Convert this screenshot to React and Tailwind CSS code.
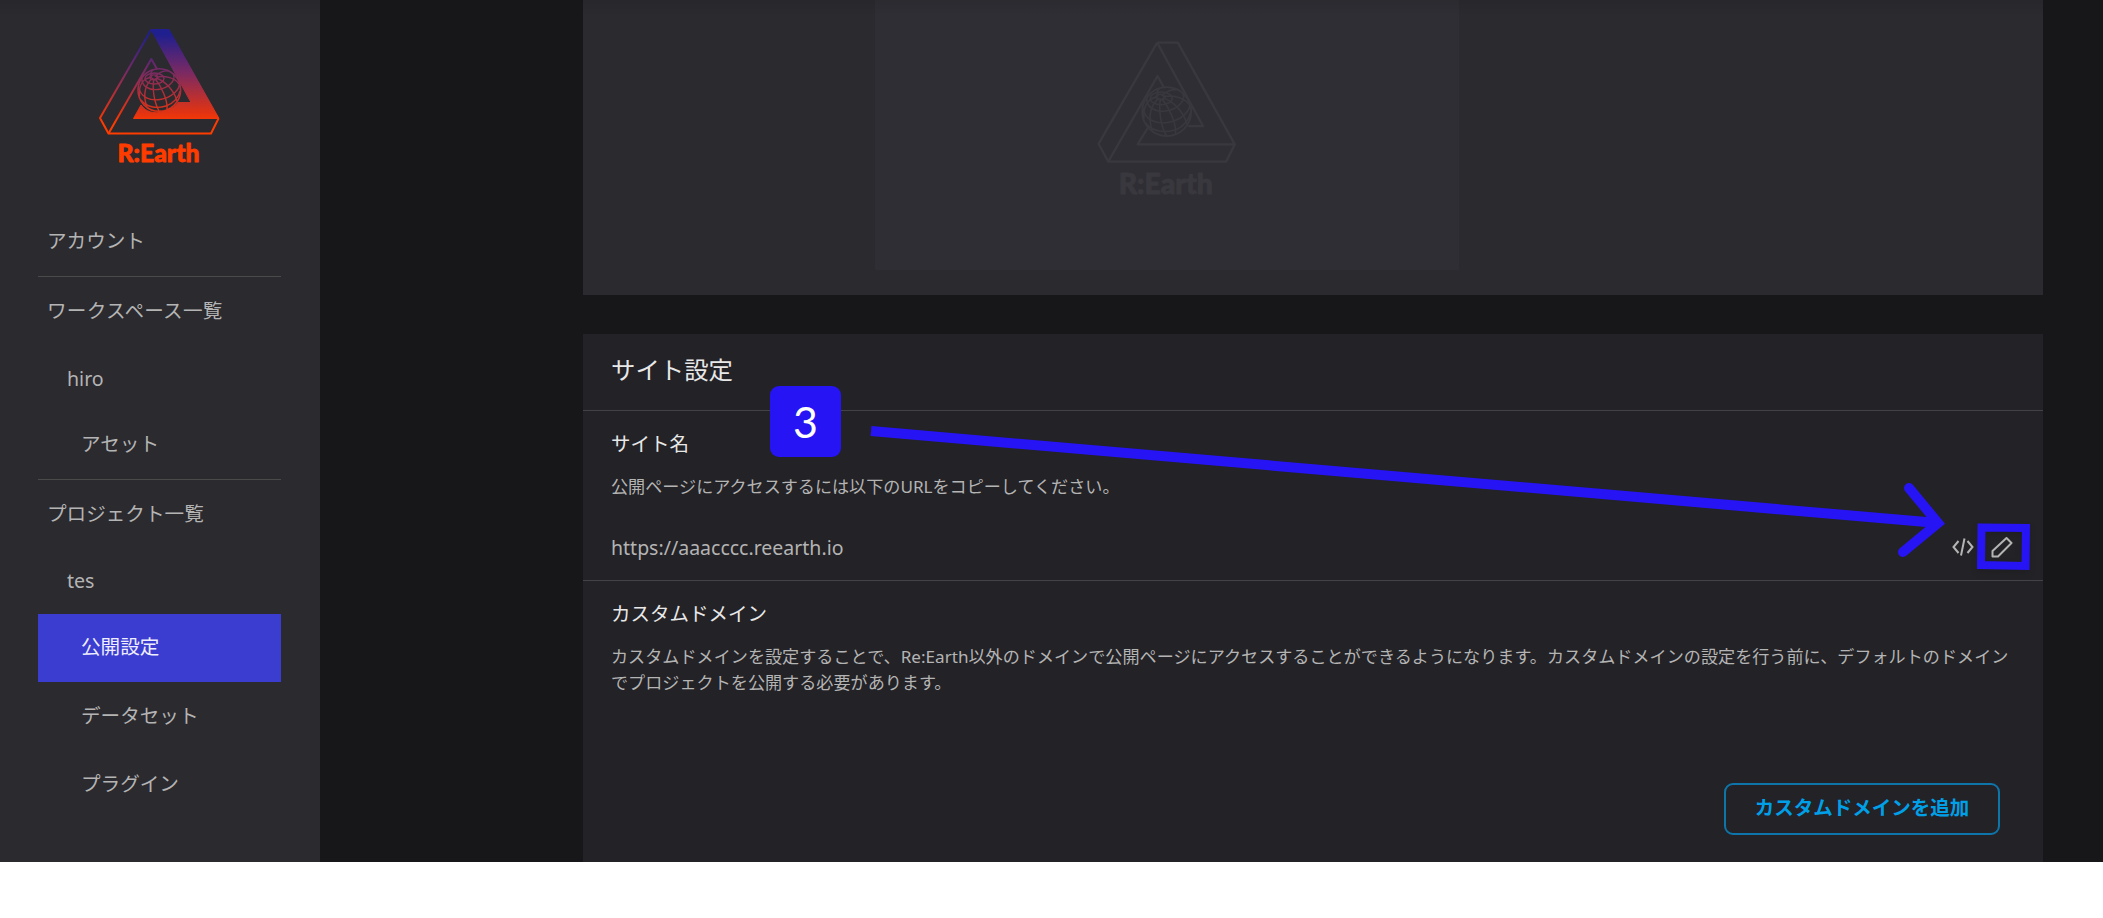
const NAV = [
  { label: "アカウント", cls: "pl-[9px] h-[69px] pb-[2px] border-b border-[#4a4a4a]" },
  { label: "ワークスペース一覧", cls: "pl-[9px] h-[68px] pb-px tracking-[0.25px]" },
  { label: "hiro", cls: "pl-[29px] h-[67px]" },
  { label: "アセット", cls: "pl-[43px] h-[68px] pb-[3px] border-b border-[#4a4a4a]" },
  { label: "プロジェクト一覧", cls: "pl-[9px] h-[67px]" },
  { label: "tes", cls: "pl-[29px] h-[67px]" },
  { label: "公開設定", cls: "pl-[43px] h-[68px] pb-[2px] bg-[#3b3cd0] text-[#eeeeff]" },
  { label: "データセット", cls: "pl-[43px] h-[68px]" },
  { label: "プラグイン", cls: "pl-[43px] h-[67px]" },
];

function Globe() {
  return (
    <g strokeWidth="1.4">
      <circle cx="79.3" cy="80" r="21.3" strokeWidth="1.6" />
      <ellipse cx="73.8" cy="67.3" rx="4" ry="2.4" />
      <ellipse cx="74.5" cy="68.5" rx="9.5" ry="5.5" />
      <path d="M62 67.5C61 76 69 80.5 78 79.5C88 78.5 96 71 93.500 64.500" />
      <path d="M58.500 76C60 88 71 91 80 89.500C91 88 100 80 99.500 73" />
      <path d="M61 90C67 98 78 98.500 86 96C93 94 99 87 100 81" />
      <path d="M72 67C64 68 58.500 74 59.500 86" />
      <path d="M73 68C66 73 62 84 67 97" />
      <path d="M74 68.500C72 78 74 92 79 101" />
      <path d="M75 68.500C81 76 88 90 87 99.500" />
      <path d="M76 68C85 71 94 80 97 91" />
      <path d="M76 67C86 65.500 95 68 99 74" />
      <path d="M75 66.500C78 62.500 84 60.500 88 61" />
      <path d="M72 66.500C70 63.500 71 61.500 73 60" />
    </g>
  );
}

function Logo({ mono, className }) {
  const paint = mono ? "#39383e" : "url(#logo-gradient)";
  return (
    <svg viewBox="18 16 124 140" className={className} fill="none" stroke={paint} strokeWidth="2" strokeLinejoin="round">
      <defs>
        <linearGradient id="logo-gradient" gradientUnits="userSpaceOnUse" x1="0" y1="19" x2="0" y2="124">
          <stop offset="0.05" stopColor="#1f1f8f" />
          <stop offset="0.42" stopColor="#7c2a62" />
          <stop offset="0.8" stopColor="#e23312" />
          <stop offset="0.9" stopColor="#ff3c00" />
        </linearGradient>
      </defs>
      <path d="M71 20L20 108L28.500 123.500H131L138.500 108.500" />
      <path d="M28.500 123.500L71.300 49L77 59" />
      {mono ? (
        <path d="M71 20H89L138.500 108.500H54L63 94M71 20L111 92.700H98" />
      ) : (
        <path fill={paint} strokeWidth="1" d="M71 19.500H89L139 108.500H53.500L61 95C66 102 74 104 82 102C90 100 95 97 98 92.500H111Z" />
      )}
      <Globe />
      <text x="37.500" y="152" textLength="82" lengthAdjust="spacingAndGlyphs" fill={mono ? "#39383e" : "#ff3c00"} stroke={mono ? "#39383e" : "#ff3c00"} strokeWidth="0.8" className="font-['Lato'] text-[24px] font-black">
        R:Earth
      </text>
    </svg>
  );
}

export default function App() {
  return (
    <div className="relative h-[918px] w-[2103px] overflow-hidden bg-white font-['Noto_Sans','Noto_Sans_CJK_JP',sans-serif] text-[#b4b4b4]">
      <div className="flex h-[862px] bg-[#171719]">
        <aside className="w-[320px] shrink-0 bg-[#2b2a2f]">
          <div className="flex h-[208px] justify-center bg-linear-to-b from-black/8 to-transparent to-[16px] pt-[26px]">
            <Logo className="h-[140px] w-[124px]" />
          </div>
          <nav className="ml-[38px] w-[243px] text-[19.6px]">
            {NAV.map((item) => (
              <div key={item.label} className={`flex items-center ${item.cls}`}>{item.label}</div>
            ))}
          </nav>
        </aside>
        <main className="ml-[263px] w-[1460px]">
          <section className="flex h-[295px] bg-[#2b2a2f] bg-linear-to-b from-black/8 to-transparent to-[16px] pl-[292px]">
            <div className="flex h-[270px] w-[584px] justify-center bg-[#2f2e34] bg-linear-to-b from-black/8 to-transparent to-[16px] pt-[38px]">
              <Logo mono className="h-[161px] w-[143px]" />
            </div>
          </section>
          <section className="mt-[39px] flex h-[528px] flex-col bg-[#232226]">
            <h2 className="flex h-[77px] items-center border-b border-[#434246] pl-[28px] pb-1 text-[24.4px] text-[#e8e8e8]">サイト設定</h2>
            <div className="flex h-[170px] flex-col border-b border-[#434246] pl-[28px] pt-[20px]">
              <h3 className="text-[19.5px] leading-[26px] text-[#e8e8e8]">サイト名</h3>
              <p className="mt-[17px] text-[17.1px] leading-[26px]">公開ページにアクセスするには以下のURLをコピーしてください。</p>
              <div className="mt-[34px] flex items-center justify-between">
                <span className="text-[19.5px] leading-[28px]">https://aaacccc.reearth.io</span>
                <div className="flex items-center gap-[17px] pr-[30px]">
                  <svg className="h-[22px] w-[22px]" viewBox="0 0 22 22" fill="none" stroke="#b4b4b4" strokeWidth="2">
                    <path d="M6.500 4L1.500 10L6.500 16M15.500 4L20.500 10L15.500 16M12.500 1.500L9 18.500" />
                  </svg>
                  <svg className="h-[22px] w-[22px]" viewBox="0 0 22 22" fill="none" stroke="#b4b4b4" strokeWidth="2" strokeLinejoin="round">
                    <path d="M1.500 19.500V14L15.500 1L20.500 6L7 19.500Z" />
                  </svg>
                </div>
              </div>
            </div>
            <div className="flex flex-1 flex-col pl-[28px] pt-[20px]">
              <h3 className="text-[19.5px] leading-[26px] text-[#e8e8e8]">カスタムドメイン</h3>
              <p className="mt-[17px] w-[1425px] text-[17.11px] leading-[25.6px]">
                カスタムドメインを設定することで、Re:Earth以外のドメインで公開ページにアクセスすることができるようになります。カスタムドメインの設定を行う前に、デフォルトのドメイン
                <br />
                でプロジェクトを公開する必要があります。
              </p>
              <button className="mt-auto mr-[43px] mb-[27px] flex h-[52px] w-[276px] items-center justify-center self-end rounded-[9px] border-2 border-[#0d75a9] pb-[2px] text-[19.5px] font-bold text-[#00a0e8]">カスタムドメインを追加</button>
            </div>
          </section>
        </main>
      </div>
      <div className="absolute top-[386px] left-[770px] flex h-[71px] w-[71px] items-center justify-center rounded-[9px] bg-[#2614f5] font-['Lato',sans-serif] text-[43px] leading-none text-white">3</div>
      <svg className="absolute top-0 left-0 h-[918px] w-[2103px]" viewBox="0 0 2103 918" fill="none" stroke="#2614f5" strokeWidth="10">
        <path d="M871 431L1938 523" />
        <path d="M1909 488L1938 523L1903 552" strokeLinecap="round" />
        <path className="drop-shadow-md" d="M1981.500 527.500L2026 528L2025.500 566L1981 565Z" strokeWidth="8" />
      </svg>
    </div>
  );
}
